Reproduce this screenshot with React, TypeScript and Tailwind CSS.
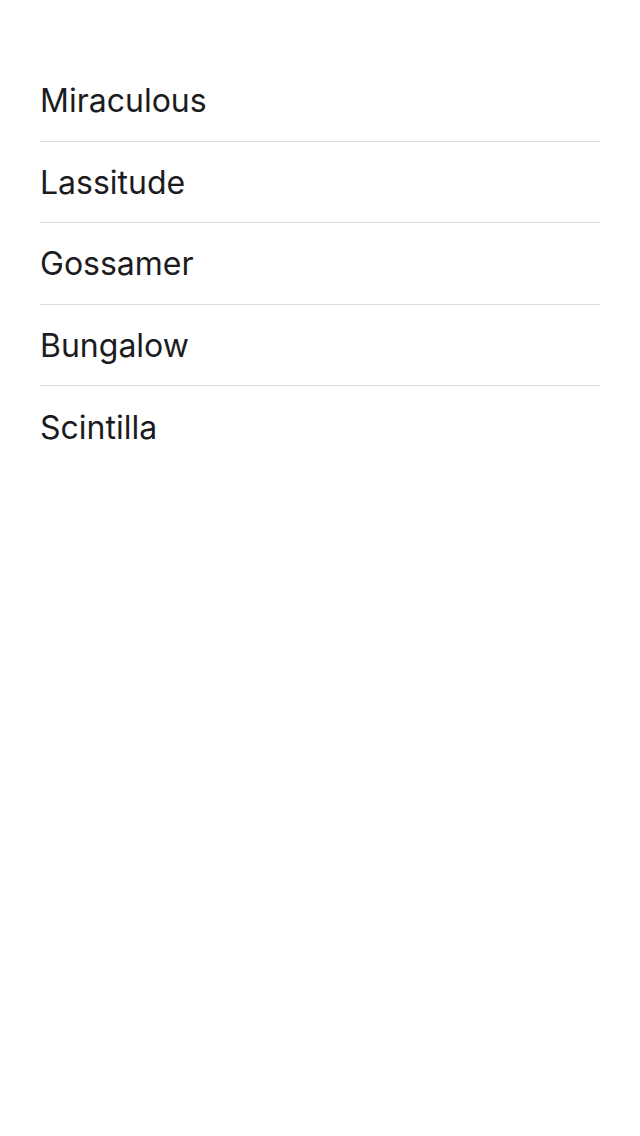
const words = ['Miraculous', 'Lassitude', 'Gossamer', 'Bungalow', 'Scintilla'];

export default function App() {
  return (
    <div className="min-h-[1136px] bg-white px-10 pt-[60px]" style={{ fontFamily: 'Inter, "Noto Sans", sans-serif' }}>
      <ul>
        {words.map((w, i) => (
          <li
            key={w}
            className={`flex h-[81.5px] items-center pt-0.5 text-[32px] text-[#1c1c1e] ${i < words.length - 1 ? 'border-b border-[#d3dde5]' : ''}`}
          >
            {w}
          </li>
        ))}
      </ul>
    </div>
  );
}
